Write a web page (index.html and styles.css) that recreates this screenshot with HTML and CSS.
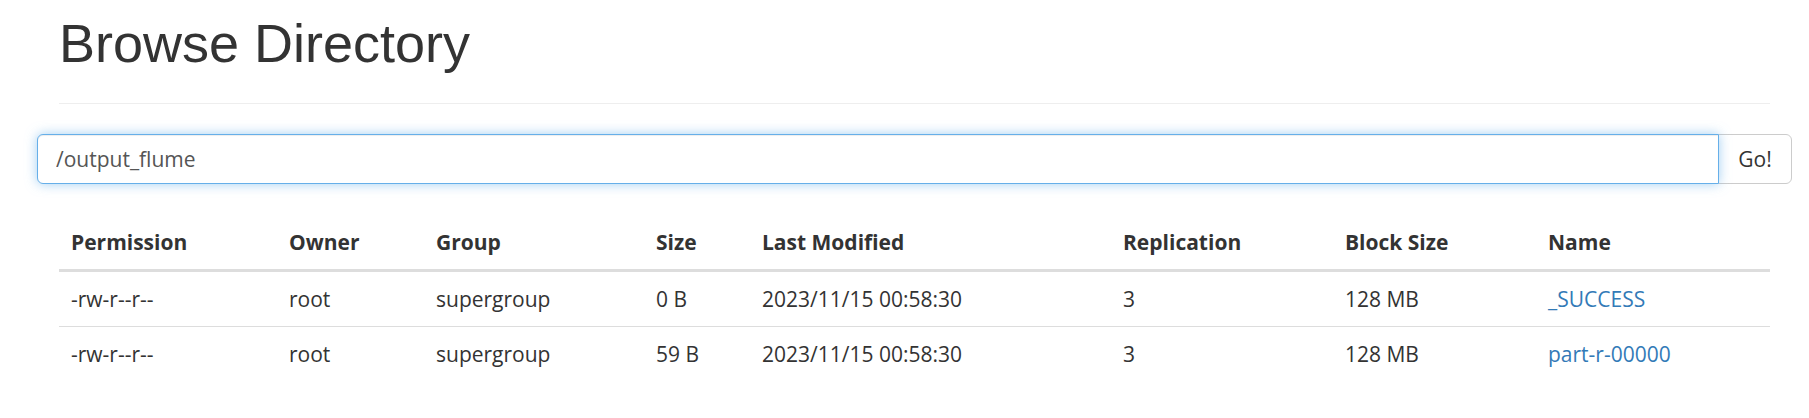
FILE: index.html
```html
<!DOCTYPE html>
<html>
<head>
<meta charset="utf-8">
<title>Browsing HDFS</title>
<link rel="stylesheet" href="styles.css">
</head>
<body>
<div class="container">
  <div class="page-header">
    <h1>Browse Directory</h1>
  </div>
  <form class="nav-form" onsubmit="return false;">
    <div class="input-group">
      <input type="text" class="form-control" id="directory" value="/output_flume">
      <button class="btn" type="submit">Go!</button>
    </div>
  </form>
  <table class="table">
    <thead>
      <tr>
        <th class="c-perm">Permission</th>
        <th class="c-owner">Owner</th>
        <th class="c-group">Group</th>
        <th class="c-size">Size</th>
        <th class="c-mod">Last Modified</th>
        <th class="c-rep">Replication</th>
        <th class="c-block">Block Size</th>
        <th class="c-name">Name</th>
      </tr>
    </thead>
    <tbody>
      <tr>
        <td>-rw-r--r--</td>
        <td>root</td>
        <td>supergroup</td>
        <td>0 B</td>
        <td>2023/11/15 00:58:30</td>
        <td>3</td>
        <td>128 MB</td>
        <td><a href="#">_SUCCESS</a></td>
      </tr>
      <tr>
        <td>-rw-r--r--</td>
        <td>root</td>
        <td>supergroup</td>
        <td>59 B</td>
        <td>2023/11/15 00:58:30</td>
        <td>3</td>
        <td>128 MB</td>
        <td><a href="#">part-r-00000</a></td>
      </tr>
    </tbody>
  </table>
</div>
<script>
  var d = document.getElementById('directory');
  d.focus();
  d.setSelectionRange(d.value.length, d.value.length);
</script>
</body>
</html>
```

FILE: styles.css
```css
* {
  box-sizing: border-box;
}

html, body {
  margin: 0;
  padding: 0;
  background: #fff;
}

body {
  font-family: "Open Sans", "Noto Sans", sans-serif;
  font-size: 21px;
  line-height: 30px;
  color: #333;
}

.container {
  width: 1755px;
  margin-left: 37px;
  padding: 0 22px;
}

.page-header {
  padding-top: 14px;
  padding-bottom: 30px;
  border-bottom: 1px solid #eee;
}

.page-header h1 {
  margin: 0;
  font-family: "Liberation Sans", Arial, sans-serif;
  font-weight: 400;
  font-size: 54px;
  line-height: 59px;
  color: #333;
}

.nav-form {
  margin: 30px -22px 0;
}

.input-group {
  display: flex;
  height: 50px;
}

.form-control {
  flex: 1;
  height: 50px;
  margin: 0;
  padding: 0 18px;
  font-family: "Open Sans", "Noto Sans", sans-serif;
  font-size: 21px;
  color: #555;
  background: #fff;
  border: 1px solid #66afe9;
  border-radius: 6px 0 0 6px;
  outline: 0;
  box-shadow: inset 0 1px 1px rgba(0, 0, 0, 0.075), 0 0 12px rgba(102, 175, 233, 0.6);
  caret-color: #333;
  position: relative;
  z-index: 2;
}

.btn {
  width: 74px;
  height: 50px;
  margin: 0 0 0 -1px;
  padding: 0;
  font-family: "Open Sans", "Noto Sans", sans-serif;
  font-size: 21px;
  color: #333;
  background: #fff;
  border: 1px solid #ccc;
  border-radius: 0 6px 6px 0;
  cursor: pointer;
}

.table {
  width: 1711px;
  margin-top: 31px;
  border-collapse: collapse;
  border-spacing: 0;
  table-layout: fixed;
}

.table th,
.table td {
  padding: 12px;
  line-height: 30px;
  text-align: left;
  vertical-align: top;
  white-space: nowrap;
}

.table th {
  font-weight: 700;
  border-bottom: 3px solid #ddd;
}

.table td {
  border-top: 1px solid #ddd;
}

.table a {
  color: #337ab7;
  text-decoration: none;
}

.c-perm { width: 218px; }
.c-owner { width: 147px; }
.c-group { width: 220px; }
.c-size { width: 106px; }
.c-mod { width: 361px; }
.c-rep { width: 222px; }
.c-block { width: 203px; }
.c-name { width: 234px; }
```
